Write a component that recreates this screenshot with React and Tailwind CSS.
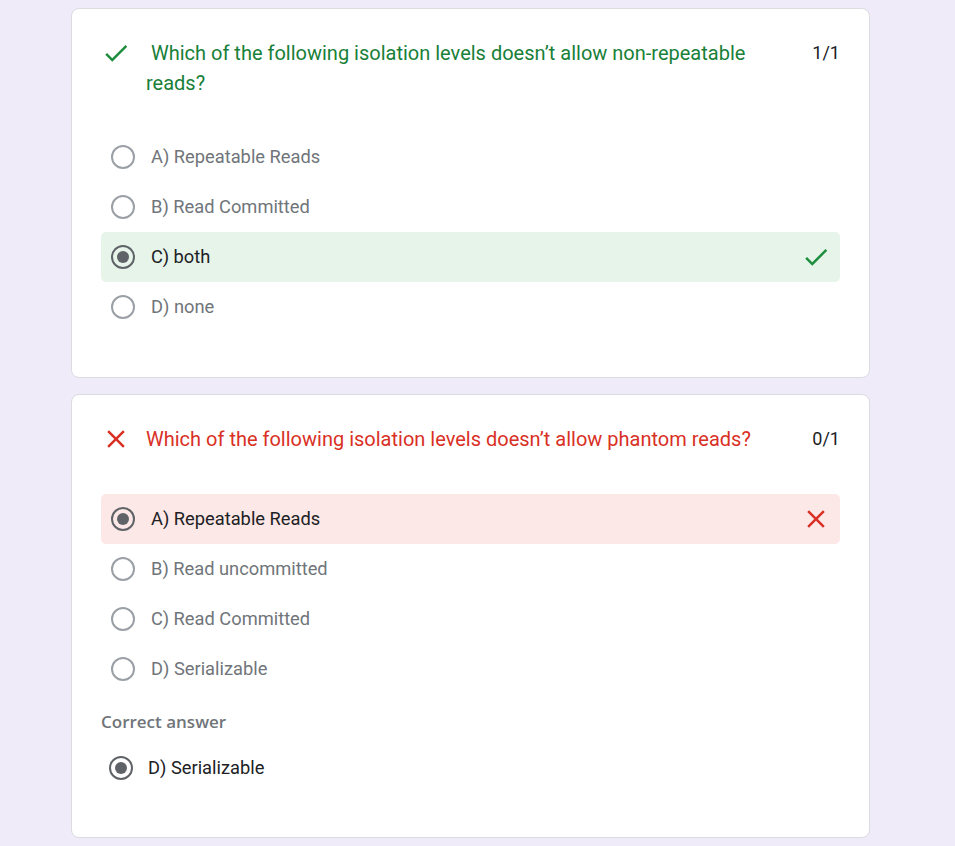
import React from "react";

const CheckIcon = ({ className = "" }) => (
  <svg viewBox="0 0 24 24" className={className} fill="currentColor">
    <path d="M9 16.17 4.83 12l-1.42 1.41L9 19 21 7l-1.41-1.41z" />
  </svg>
);

const CrossIcon = ({ className = "" }) => (
  <svg viewBox="0 0 24 24" className={className} fill="currentColor">
    <path d="M19 6.41 17.59 5 12 10.59 6.41 5 5 6.41 10.59 12 5 17.59 6.41 19 12 13.41 17.59 19 19 17.59 13.41 12z" />
  </svg>
);

const Radio = ({ selected }) => (
  <div
    className={`w-[24px] h-[24px] rounded-full border-[2.5px] flex items-center justify-center shrink-0 ${
      selected ? "border-[#5f6368]" : "border-[#9aa0a6]"
    }`}
  >
    {selected && <div className="w-[12px] h-[12px] rounded-full bg-[#5f6368]" />}
  </div>
);

const Option = ({ label, selected, status }) => {
  const bg =
    status === "correct" ? "bg-[#e6f4ea]" : status === "wrong" ? "bg-[#fce8e6]" : "";
  return (
    <div className={`flex items-center h-[50px] pl-[10px] pr-[9px] rounded-[5px] ${bg}`}>
      <Radio selected={selected} />
      <span
        className={`ml-[16px] flex-1 text-[18.3px] ${
          selected ? "text-[#202124]" : "text-[#70757a]"
        }`}
      >
        {label}
      </span>
      {status === "correct" && <CheckIcon className="w-[30px] h-[30px] text-[#1e8e3e]" />}
      {status === "wrong" && <CrossIcon className="w-[30px] h-[30px] text-[#d93025]" />}
    </div>
  );
};

const Header = ({ correct, text, score, gap }) => (
  <div className={`flex items-start ${gap}`}>
    <div className="w-[45px] h-[30px] flex items-center shrink-0">
      {correct ? (
        <CheckIcon className="w-[30px] h-[30px] text-[#1e8e3e]" />
      ) : (
        <CrossIcon className="w-[30px] h-[30px] text-[#d93025]" />
      )}
    </div>
    <div
      className={`flex-1 pr-[50px] text-[20px] leading-[30px] ${
        correct ? "text-[#188038]" : "text-[#d93025]"
      }`}
    >
      {text}
    </div>
    <div className="text-[18px] leading-[30px] text-[#202124]">{score}</div>
  </div>
);

export default function App() {
  return (
    <div
      className="min-h-screen bg-[#f0ebf8] pt-[8px] pb-[10px]"
      style={{ fontFamily: "Roboto, Arial, sans-serif" }}
    >
      <div className="ml-[71px] w-[799px] flex flex-col gap-[16px]">
        {/* Question 1 */}
        <div className="bg-white border border-[#dadce0] rounded-[8px] pt-[29px] pb-[45px] px-[29px]">
          <Header
            correct
            text={"\u00a0Which of the following isolation levels doesn’t allow non-repeatable reads?"}
            score="1/1"
            gap="mb-[34px]"
          />
          <Option label="A) Repeatable Reads" />
          <Option label="B) Read Committed" />
          <Option label="C) both" selected status="correct" />
          <Option label="D) none" />
        </div>

        {/* Question 2 */}
        <div className="bg-white border border-[#dadce0] rounded-[8px] pt-[29px] pb-[49px] px-[29px]">
          <Header
            text="Which of the following isolation levels doesn’t allow phantom reads?"
            score="0/1"
            gap="mb-[40px]"
          />
          <Option label="A) Repeatable Reads" selected status="wrong" />
          <Option label="B) Read uncommitted" />
          <Option label="C) Read Committed" />
          <Option label="D) Serializable" />
          <div
            className="mt-[18px] text-[17px] leading-[20px] font-semibold text-[#70757a]"
            style={{ fontFamily: "'Open Sans', Roboto, sans-serif" }}
          >
            Correct answer
          </div>
          <div className="flex items-center h-[40px] mt-[16px] pl-[8px]">
            <Radio selected />
            <span className="ml-[15px] text-[18.3px] text-[#202124]">D) Serializable</span>
          </div>
        </div>
      </div>
    </div>
  );
}
